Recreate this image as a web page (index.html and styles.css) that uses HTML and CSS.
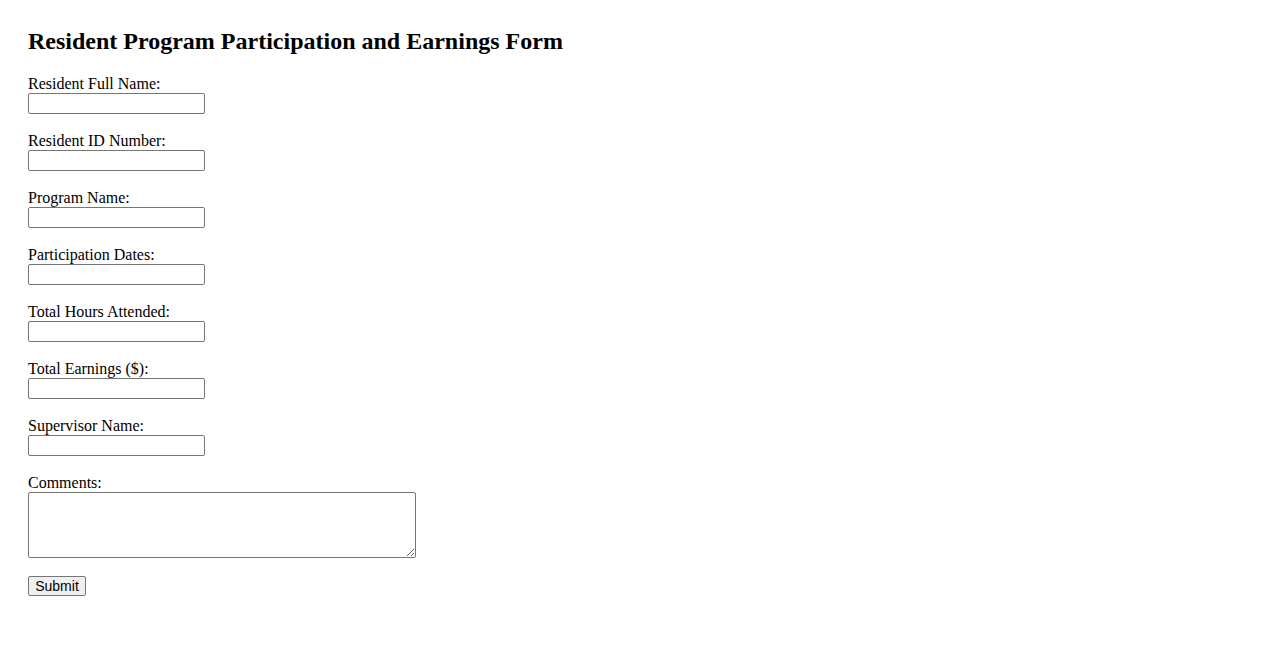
FILE: index.html
```html
<!DOCTYPE html>
<html lang="en">
<head>
    <meta charset="UTF-8">
    <meta name="viewport" content="width=device-width, initial-scale=1.0">
    <title>Resident Program Participation and Earnings Form</title>
    <link rel="stylesheet" href="styles.css">
</head>
<body>
    <h2 class="title">Resident Program Participation and Earnings Form</h2>
    <form class="earnings-form">
        <div class="field">
            <label for="fullname">Resident Full Name:</label>
            <input type="text" id="fullname" name="fullname">
        </div>
        <div class="field">
            <label for="residentid">Resident ID Number:</label>
            <input type="text" id="residentid" name="residentid">
        </div>
        <div class="field">
            <label for="program">Program Name:</label>
            <input type="text" id="program" name="program">
        </div>
        <div class="field">
            <label for="dates">Participation Dates:</label>
            <input type="text" id="dates" name="dates">
        </div>
        <div class="field">
            <label for="hours">Total Hours Attended:</label>
            <input type="text" id="hours" name="hours">
        </div>
        <div class="field">
            <label for="earnings">Total Earnings ($):</label>
            <input type="text" id="earnings" name="earnings">
        </div>
        <div class="field">
            <label for="supervisor">Supervisor Name:</label>
            <input type="text" id="supervisor" name="supervisor">
        </div>
        <div class="field">
            <label for="comments">Comments:</label>
            <textarea id="comments" name="comments"></textarea>
        </div>
        <input type="submit" value="Submit">
    </form>
</body>
</html>
```

FILE: styles.css
```css
body {
    margin: 0;
    padding: 27px 28px;
    font-family: 'Liberation Serif', 'Times New Roman', serif;
    font-size: 16px;
    color: #000;
    background: #fff;
}

.title {
    font-size: 24px;
    font-weight: bold;
    margin: 0 0 20px;
    line-height: 28px;
}

.field {
    margin-bottom: 18px;
}

label {
    display: block;
    line-height: 18px;
}

input[type=text], textarea {
    display: block;
    box-sizing: border-box;
    margin: 0;
    border: 1px solid #767676;
    border-radius: 2px;
    padding: 1px 2px;
    font-family: 'Liberation Sans', Arial, sans-serif;
    font-size: 13.33px;
    background: #fff;
}

input[type=text] {
    width: 177px;
    height: 21px;
}

textarea {
    width: 388px;
    height: 66px;
    font-family: 'Liberation Mono', monospace;
}

input[type=submit] {
    display: block;
    box-sizing: border-box;
    width: 58px;
    height: 20px;
    margin: 2px 0 0;
    padding: 1px 6px;
    border: 1px solid #767676;
    border-radius: 2px;
    background-color: #efefef;
    font-family: 'Liberation Sans', Arial, sans-serif;
    font-size: 14px;
    color: #000;
}
```
